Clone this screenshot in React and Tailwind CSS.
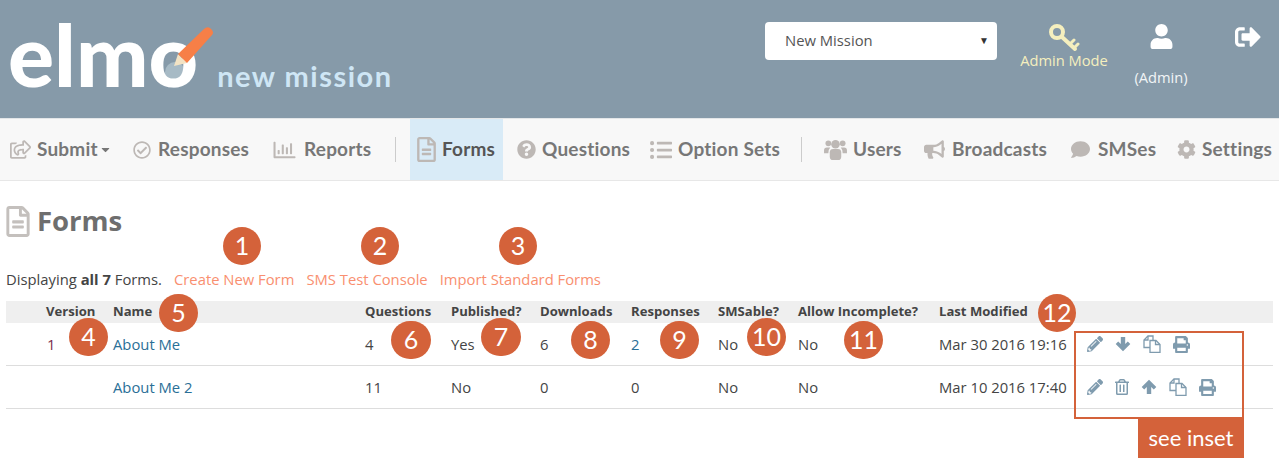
import React from 'react';
import {
  FaBullhorn, FaCaretDown, FaCog, FaComment, FaListUl, FaPencilAlt, FaPrint,
  FaQuestionCircle, FaRegChartBar, FaRegCheckCircle, FaRegFileAlt, FaRegShareSquare, FaRegTrashAlt,
  FaSignOutAlt, FaUser,
} from 'react-icons/fa';

const UsersIcon = ({ className }) => (
  <svg className={className} viewBox="0 0 24 22" fill="currentColor">
    <circle cx="12" cy="5.5" r="4.5" />
    <circle cx="4.5" cy="4.5" r="3" />
    <circle cx="19.5" cy="4.5" r="3" />
    <rect x="6" y="10.5" width="12" height="11.5" rx="3.5" />
    <path d="M0 15v-3q0-3 3-3h3.5Q4.5 11 4.5 15z" />
    <path d="M24 15v-3q0-3-3-3h-3.5q2 2 2 6z" />
  </svg>
);

const navLeft = [
  { label: 'Submit', Icon: FaRegShareSquare, box: 'w-[123px]', icon: 'w-[21px] h-[19px] mr-[6px]', caret: true },
  { label: 'Responses', Icon: FaRegCheckCircle, box: 'w-[139px]', icon: 'w-[18px] h-[18px] mr-[7px]' },
  { label: 'Reports', Icon: FaRegChartBar, box: 'w-[123px]', icon: 'w-[25px] h-[22px] mr-[7px]' },
];
const navMid = [
  { label: 'Forms', Icon: FaRegFileAlt, box: 'w-[93px] pl-[7px] mr-[14px] bg-[#d9ebf7]', icon: 'w-[19px] h-[25px] mr-[6px]', active: true },
  { label: 'Questions', Icon: FaQuestionCircle, box: 'w-[133px]', icon: 'w-[19px] h-[19px] mr-[6px]' },
  { label: 'Option Sets', Icon: FaListUl, box: 'w-[151px]', icon: 'w-[22px] h-[22px] mr-[6px]' },
];
const navRight = [
  { label: 'Users', Icon: UsersIcon, box: 'w-[100px]', icon: 'w-[23px] h-[21px] mr-[6px]' },
  { label: 'Broadcasts', Icon: FaBullhorn, box: 'w-[146px]', icon: 'w-[21px] h-[19px] mr-[7px]' },
  { label: 'SMSes', Icon: FaComment, box: 'w-[107px]', icon: 'w-[21px] h-[19px] mr-[7px]' },
  { label: 'Settings', Icon: FaCog, box: 'w-[102px]', icon: 'w-[19px] h-[19px] mr-[6px]' },
];

const callouts = [
  { n: '1', box: 'left-[223px] top-[227px] w-[38px] h-[38px]' },
  { n: '2', box: 'left-[361px] top-[227px] w-[38px] h-[38px]' },
  { n: '3', box: 'left-[499px] top-[227px] w-[38px] h-[38px]' },
  { n: '4', box: 'left-[69px] top-[318px] w-[39px] h-[38px]' },
  { n: '5', box: 'left-[159px] top-[294px] w-[39px] h-[38px]' },
  { n: '6', box: 'left-[391px] top-[321px] w-[40px] h-[38px]' },
  { n: '7', box: 'left-[481px] top-[318px] w-[40px] h-[38px]' },
  { n: '8', box: 'left-[571px] top-[321px] w-[39px] h-[38px]' },
  { n: '9', box: 'left-[660px] top-[321px] w-[39px] h-[38px]' },
  { n: '10', box: 'left-[747px] top-[318px] w-[39px] h-[38px]' },
  { n: '11', box: 'left-[844px] top-[321px] w-[39px] h-[38px]' },
  { n: '12', box: 'left-[1038px] top-[294px] w-[38px] h-[38px]' },
];

const cols = 'grid grid-cols-[107px_252px_86px_89px_91px_87px_80px_141px_148px_181px]';

const KeyIcon = () => (
  <svg width="32" height="30" viewBox="0 0 32 30" fill="none" stroke="currentColor" strokeLinecap="round">
    <circle cx="9" cy="9" r="6" strokeWidth="4" />
    <path d="M14 14 L27 26" strokeWidth="4" />
    <path d="M22 21 L26 17 M26 25 L30 21" strokeWidth="3" />
  </svg>
);

const ArrowDown = () => (
  <svg width="16" height="16" viewBox="0 0 16 16" fill="currentColor">
    <path d="M5.8 1h4.4v7l2.6-2.6 2.5 2.5L8 15.2.7 7.9l2.5-2.5L5.8 8z" />
  </svg>
);

const ArrowUp = () => (
  <svg width="16" height="16" viewBox="0 0 16 16" fill="currentColor">
    <path d="M5.8 15h4.4V8l2.6 2.6 2.5-2.5L8 .8.7 8.1l2.5 2.5L5.8 8z" />
  </svg>
);

const FilesIcon = () => (
  <svg width="18" height="18" viewBox="0 0 18 18" fill="none" stroke="currentColor" strokeWidth="1.3">
    <path d="M7 12.5H1V5l4-4h5v4" />
    <path d="M5 1v4H1" />
    <path d="M7 5.5h6l4 4v8H7z" fill="white" />
    <path d="M12.5 5.5v4h4.5" />
  </svg>
);

const Pencil = () => <FaPencilAlt className="h-[16px] w-[16px]" />;
const Printer = () => <FaPrint className="h-[17px] w-[17px]" />;

function NavItem({ item }) {
  const { label, Icon, box, icon, caret, active } = item;
  return (
    <a className={`flex h-full shrink-0 items-center ${box}`}>
      <Icon className={`shrink-0 text-[#bdb8b5] ${icon}`} />
      <span className={`text-[19px] font-bold tracking-[0.2px] whitespace-nowrap ${active ? 'text-[#555]' : 'text-[#777]'}`}>{label}</span>
      {caret && <FaCaretDown className="ml-[1px] text-[13px] text-[#777]" />}
    </a>
  );
}

function Row({ version, name, questions, published, downloads, responses, sms, incomplete, modified, actions }) {
  return (
    <div className={`${cols} h-[43px] items-center border-b border-[#ddd] text-[14.8px] text-[#444]`}>
      <div className="pl-[41px] text-[#7a2e4d]">{version}</div>
      <a className="text-[#2a6f97]">{name}</a>
      <div>{questions}</div>
      <div>{published}</div>
      <div>{downloads}</div>
      <div className={responses === '2' ? 'text-[#2a6f97]' : ''}>{responses}</div>
      <div>{sms}</div>
      <div>{incomplete}</div>
      <div className="whitespace-nowrap">{modified}</div>
      <div className="flex items-center gap-[12px] text-[#7f9bae]">{actions}</div>
    </div>
  );
}

export default function App() {
  return (
    <div className="relative h-[467px] w-[1279px] overflow-hidden bg-white font-['Open_Sans',sans-serif]">
      <header className="flex h-[118px] bg-[#869aa9]">
        <div className="relative flex w-[765px] items-start pl-[8px]">
          <div className="absolute top-[62px] left-[165px] h-[26px] w-[20px] rounded-full bg-[#a7bac5]" />
          <span className="relative mt-[2px] font-['Lato',sans-serif] text-[86px] leading-[104px] font-black text-white">elmo</span>
          <span className="mt-[56px] ml-[19px] font-['Lato',sans-serif] text-[29px] leading-[40px] font-bold tracking-[1.5px] text-[#cfe6f5]">new mission</span>
          <svg className="absolute top-[26px] left-[170px]" width="44" height="42" viewBox="0 0 44 42">
            <path d="M4 40 L8 28 L17 37 Z" fill="#f3e3c4" />
            <path d="M8 28 L34 3 Q37 0 40 2 L42 4 Q44 7 42 9 L17 37 Z" fill="#f77f47" />
          </svg>
        </div>
        <div className="mt-[22px] flex h-[38px] w-[232px] items-center justify-between rounded-[4px] bg-white pr-[8px] pb-[2px] pl-[20px] text-[14.8px] text-[#555]">
          <span>New Mission</span>
          <span className="text-[10px] text-[#333]">▼</span>
        </div>
        <div className="ml-[23px] flex w-[88px] flex-col items-center pt-[23px] text-[#f5efbe]">
          <KeyIcon />
          <span className="mt-[-3px] text-[14.7px] leading-[20px] whitespace-nowrap">Admin Mode</span>
        </div>
        <div className="ml-[26px] flex w-[54px] flex-col items-center pt-[24px] text-[#f1f4f6]">
          <FaUser className="text-[25px] text-white" />
          <span className="mt-[18px] text-[14.7px] leading-[20px] whitespace-nowrap">(Admin)</span>
        </div>
        <div className="ml-[47px] pt-[24px] text-white">
          <FaSignOutAlt className="text-[26px]" />
        </div>
      </header>

      <nav className="flex h-[63px] items-center border-t border-b border-t-[#e3e6e8] border-b-[#e7e7e7] bg-[#f8f8f8] pl-[10px] font-['Lato',sans-serif]">
        {navLeft.map((item) => <NavItem key={item.label} item={item} />)}
        <div className="mr-[14px] h-[25px] w-px bg-[#ccc]" />
        {navMid.map((item) => <NavItem key={item.label} item={item} />)}
        <div className="mr-[22px] h-[25px] w-px bg-[#ccc]" />
        {navRight.map((item) => <NavItem key={item.label} item={item} />)}
      </nav>

      <main className="px-[6px]">
        <h1 className="mt-[20px] flex h-[40px] items-center text-[27.5px] font-bold text-[#6e6e6e]">
          <FaRegFileAlt className="mr-[7px] h-[31px] w-[24px] text-[#c4c0bd]" />
          Forms
        </h1>
        <div className="mt-[28px] flex h-[20px] items-center text-[14.8px] text-[#444]">
          <span>Displaying <b>all 7</b> Forms.</span>
          <a className="ml-[12px] text-[#f98f70]">Create New Form</a>
          <a className="ml-[12px] text-[#f98f70]">SMS Test Console</a>
          <a className="ml-[12px] text-[#f98f70]">Import Standard Forms</a>
        </div>

        <div className={`${cols} mt-[12px] h-[22px] items-center bg-[#efefef] text-[13.1px] font-bold whitespace-nowrap text-[#444]`}>
          <div className="pl-[40px]">Version</div>
          <div>Name</div>
          <div>Questions</div>
          <div>Published?</div>
          <div>Downloads</div>
          <div>Responses</div>
          <div>SMSable?</div>
          <div>Allow Incomplete?</div>
          <div>Last Modified</div>
          <div />
        </div>
        <Row
          version="1" name="About Me" questions="4" published="Yes" downloads="6" responses="2" sms="No" incomplete="No"
          modified="Mar 30 2016 19:16"
          actions={<><Pencil /><ArrowDown /><FilesIcon /><Printer /></>}
        />
        <Row
          name="About Me 2" questions="11" published="No" downloads="0" responses="0" sms="No" incomplete="No"
          modified="Mar 10 2016 17:40"
          actions={<><Pencil /><FaRegTrashAlt className="h-[16px] w-[14px]" /><ArrowUp /><FilesIcon /><Printer /></>}
        />
      </main>

      {callouts.map((c) => (
        <div key={c.n} className={`absolute flex items-center justify-center rounded-full bg-[#d4623a] font-['Lato',sans-serif] text-[25px] text-white ${c.box}`}>
          {c.n}
        </div>
      ))}

      <div className="absolute top-[331px] left-[1074px] h-[88px] w-[170px] border-2 border-[#d4623a]" />
      <div className="absolute top-[417px] left-[1138px] flex h-[41px] w-[106px] items-center justify-center bg-[#d4623a] font-['Lato',sans-serif] text-[22px] text-white">
        see inset
      </div>
    </div>
  );
}
